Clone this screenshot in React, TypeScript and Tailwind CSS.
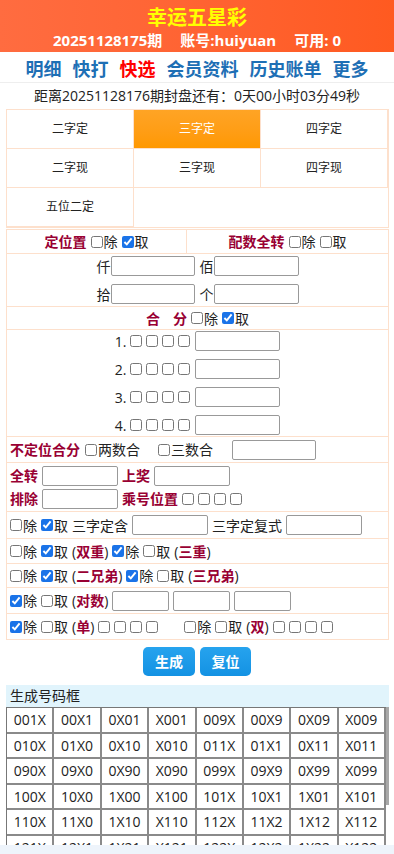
import React from "react";

const tabs = [
  ["二字定", "三字定", "四字定"],
  ["二字现", "三字现", "四字现"],
  ["五位二定", "", ""],
];

const nums = [
  ["001X", "00X1", "0X01", "X001", "009X", "00X9", "0X09", "X009"],
  ["010X", "01X0", "0X10", "X010", "011X", "01X1", "0X11", "X011"],
  ["090X", "09X0", "0X90", "X090", "099X", "09X9", "0X99", "X099"],
  ["100X", "10X0", "1X00", "X100", "101X", "10X1", "1X01", "X101"],
  ["110X", "11X0", "1X10", "X110", "112X", "11X2", "1X12", "X112"],
  ["121X", "12X1", "1X21", "X121", "122X", "12X2", "1X22", "X122"],
  ["190X", "19X0", "1X90", "X190", "199X", "19X9", "1X99", "X199"],
];

function Cb({ on = false }: { on?: boolean }) {
  return (
    <input
      type="checkbox"
      defaultChecked={on}
      className="m-0 h-[12px] w-[12px] shrink-0 accent-[#1a73e8]"
    />
  );
}

function Opt({ on = false, text }: { on?: boolean; text: string }) {
  return (
    <span className="flex items-center gap-[1px]">
      <Cb on={on} />
      <span>{text}</span>
    </span>
  );
}

function Box({ w = "w-[84px]" }: { w?: string }) {
  return <input type="text" className={`${w} h-[20px] border border-[#999] rounded-[2px] bg-white`} />;
}

function Lbl({ children }: { children: React.ReactNode }) {
  return <span className="font-bold text-[#990033]">{children}</span>;
}

function Paren({ text }: { text: string }) {
  return (
    <span>
      (<span className="font-bold text-[#990033]">{text}</span>)
    </span>
  );
}

function Four() {
  return (
    <span className="flex items-center gap-[4px]">
      <Cb />
      <Cb />
      <Cb />
      <Cb />
    </span>
  );
}

export default function App() {
  return (
    <div className="min-h-screen bg-white font-['Open_Sans','Noto_Sans_CJK_SC',sans-serif] text-[#222]">
      {/* Header */}
      <div className="flex h-[52px] flex-col items-center bg-gradient-to-r from-[#ff6c40] to-[#ff5a20] pt-[5px]">
        <p className="text-[20px] font-bold leading-[25px] text-[#ffff00]">幸运五星彩</p>
        <p className="flex gap-[18px] text-[15px] font-bold leading-[20px] text-white">
          <span>20251128175期</span>
          <span>账号:huiyuan</span>
          <span>可用: 0</span>
        </p>
      </div>

      {/* Nav */}
      <div className="flex h-[31px] items-center justify-center gap-[11px] border-b border-[#eee] pt-[4px] text-[18px] font-bold text-[#1e6fb5]">
        <span>明细</span>
        <span>快打</span>
        <span className="text-[#ff0000]">快选</span>
        <span>会员资料</span>
        <span>历史账单</span>
        <span>更多</span>
      </div>
      <p className="h-[26px] text-center text-[14px] leading-[26px]">距离20251128176期封盘还有：0天00小时03分49秒</p>

      {/* Tabs */}
      <div className="mx-[6px] w-[383px] border border-[#fde0cc]">
        {tabs.map((row, i) => (
          <div key={i} className="grid h-[39px] grid-cols-3">
            {row.map((t, j) => (
              <div
                key={j}
                className={
                  t === ""
                    ? ""
                    : `flex items-center justify-center border-b border-r border-[#fde0cc] text-[12px] ${
                        t === "三字定" ? "bg-gradient-to-b from-[#ffa424] to-[#ff9800] text-white" : "text-[#222]"
                      }`
                }
              >
                {t}
              </div>
            ))}
          </div>
        ))}
      </div>

      {/* Form */}
      <div className="mx-[6px] mt-[1px] w-[383px] border border-[#fde0cc] text-[14px]">
        <div className="flex h-[24px] border-b border-[#fde0cc]">
          <div className="flex w-[180px] items-center justify-center gap-[4px] border-r border-[#fde0cc]">
            <Lbl>定位置</Lbl>
            <Opt text="除" />
            <Opt on text="取" />
          </div>
          <div className="flex flex-1 items-center justify-center gap-[4px]">
            <Lbl>配数全转</Lbl>
            <Opt text="除" />
            <Opt text="取" />
          </div>
        </div>

        <div className="flex h-[53px] flex-col items-center justify-center gap-[7px] border-b border-[#fde0cc]">
          <div className="flex items-center">
            <span>仟</span>
            <Box />
            <span className="ml-[5px]">佰</span>
            <Box w="w-[85px]" />
          </div>
          <div className="flex items-center">
            <span>拾</span>
            <Box />
            <span className="ml-[5px]">个</span>
            <Box w="w-[85px]" />
          </div>
        </div>

        <div className="flex h-[23px] items-center justify-center gap-[4px] border-b border-[#fde0cc]">
          <span className="font-bold text-[#990033]">
            合<span className="inline-block w-[13px]" />分
          </span>
          <Opt text="除" />
          <Opt on text="取" />
        </div>

        <div className="flex h-[107px] flex-col items-center justify-center gap-[7px] border-b border-[#fde0cc]">
          {[1, 2, 3, 4].map((n) => (
            <div key={n} className="flex items-center gap-[4px]">
              <span>{n}.</span>
              <Four />
              <span className="ml-[1px]">
                <Box w="w-[85px]" />
              </span>
            </div>
          ))}
        </div>

        <div className="flex h-[26px] items-center border-b border-[#fde0cc] pl-[3px]">
          <Lbl>不定位合分</Lbl>
          <span className="ml-[5px]">
            <Opt text="两数合" />
          </span>
          <span className="ml-[18px]">
            <Opt text="三数合" />
          </span>
          <span className="ml-[19px]">
            <Box w="w-[84px]" />
          </span>
        </div>

        <div className="flex h-[49px] flex-col justify-center gap-[2px] border-b border-[#fde0cc] pl-[3px]">
          <div className="flex items-center gap-[4px]">
            <Lbl>全转</Lbl>
            <Box w="w-[76px]" />
            <Lbl>上奖</Lbl>
            <Box w="w-[76px]" />
          </div>
          <div className="flex items-center gap-[4px]">
            <Lbl>排除</Lbl>
            <Box w="w-[76px]" />
            <Lbl>乘号位置</Lbl>
            <Four />
          </div>
        </div>

        <div className="flex h-[27px] items-center gap-[4px] border-b border-[#fde0cc] pl-[3px]">
          <Opt text="除" />
          <Opt on text="取" />
          <span>三字定含</span>
          <Box w="w-[76px]" />
          <span>三字定复式</span>
          <Box w="w-[76px]" />
        </div>

        <div className="flex h-[25px] items-center gap-[4px] border-b border-[#fde0cc] pl-[3px]">
          <Opt text="除" />
          <Opt on text="取" />
          <Paren text="双重" />
          <Opt on text="除" />
          <Opt text="取" />
          <Paren text="三重" />
        </div>

        <div className="flex h-[24px] items-center gap-[4px] border-b border-[#fde0cc] pl-[3px]">
          <Opt text="除" />
          <Opt on text="取" />
          <Paren text="二兄弟" />
          <Opt on text="除" />
          <Opt text="取" />
          <Paren text="三兄弟" />
        </div>

        <div className="flex h-[26px] items-center gap-[4px] border-b border-[#fde0cc] pl-[3px]">
          <Opt on text="除" />
          <Opt text="取" />
          <Paren text="对数" />
          <Box w="w-[57px]" />
          <Box w="w-[57px]" />
          <Box w="w-[57px]" />
        </div>

        <div className="flex h-[25px] items-center gap-[4px] pl-[3px]">
          <Opt on text="除" />
          <Opt text="取" />
          <Paren text="单" />
          <Four />
          <span className="ml-[22px]">
            <Opt text="除" />
          </span>
          <Opt text="取" />
          <Paren text="双" />
          <Four />
        </div>
      </div>

      {/* Buttons */}
      <div className="mt-[7px] flex justify-center gap-[5px]">
        <button className="h-[29px] w-[52px] rounded-[5px] bg-gradient-to-b from-[#26a3ee] to-[#1392e3] text-[14px] font-bold text-white">
          生成
        </button>
        <button className="h-[29px] w-[51px] rounded-[5px] bg-gradient-to-b from-[#26a3ee] to-[#1392e3] text-[14px] font-bold text-white">
          复位
        </button>
      </div>

      {/* Result box */}
      <div className="mx-[6px] mt-[9px] w-[383px]">
        <p className="h-[22px] bg-[#e1f4fc] pl-[4px] text-[14px] leading-[22px]">生成号码框</p>
        <div className="flex h-[150px] overflow-hidden">
          <div className="w-[380px] border-l border-t border-[#777]">
            {nums.map((row, i) => (
              <div key={i} className="grid h-[25.5px] grid-cols-8">
                {row.map((n) => (
                  <div
                    key={n}
                    className="flex items-center justify-center border-b-2 border-r-2 border-[#8a8a8a] text-[14px] text-[#222]"
                  >
                    {n}
                  </div>
                ))}
              </div>
            ))}
          </div>
          <div className="w-[3px]">
            <div className="h-[98px] bg-[#a8a8a8]" />
          </div>
        </div>
      </div>

      <div className="fixed bottom-0 left-0 right-0 h-[9px] bg-[#eef4fb]" />
    </div>
  );
}
